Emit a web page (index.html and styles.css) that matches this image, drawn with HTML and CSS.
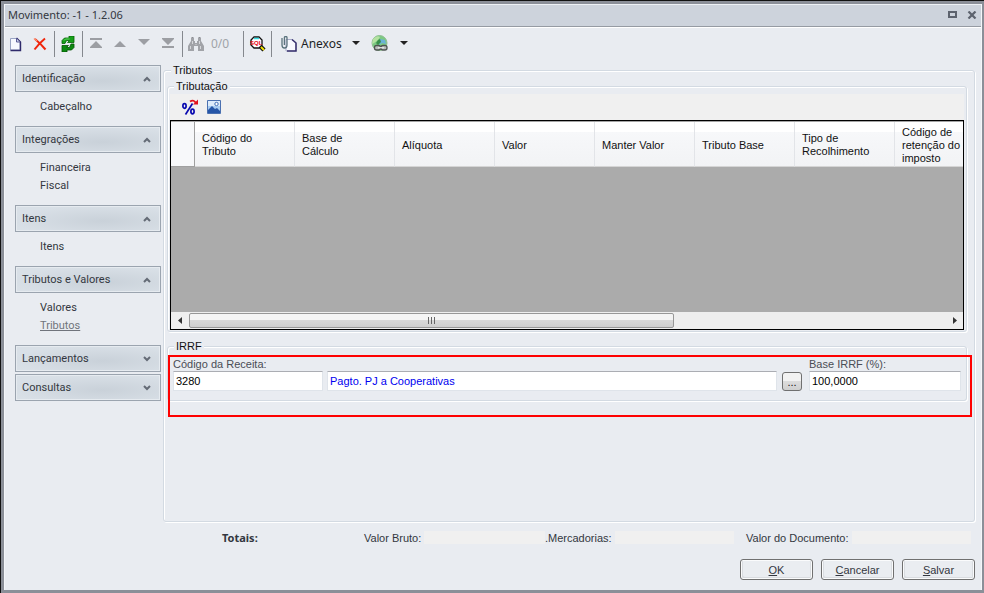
FILE: index.html
```html
<!DOCTYPE html>
<html lang="pt-BR">
<head>
<meta charset="utf-8">
<title>Movimento</title>
<link rel="stylesheet" href="styles.css">
</head>
<body>
<div class="window">
  <header class="titlebar">
    <h1 class="title">Movimento: -1 - 1.2.06</h1>
    <button class="winbtn" type="button" aria-label="Maximizar"><svg width="9" height="7"><path d="M1 1h7v5h-7z" fill="none" stroke="#5d636e" stroke-width="2"/></svg></button>
    <button class="winbtn" type="button" aria-label="Fechar"><svg width="10" height="8"><path d="M1.500 .5l7 7M8.500 .5l-7 7" fill="none" stroke="#5d636e" stroke-width="2.200"/></svg></button>
  </header>

  <nav class="toolbar" aria-label="Ferramentas">
    <button class="tool" type="button" aria-label="Novo"><svg width="16" height="16"><path d="M2.500 2.500h6l3.500 3.500v8h-9.500z" fill="#f7f9ff" stroke="#9aa4c4"/><path d="M8.500 2l4 4v8.500h-10" fill="none" stroke="#2f2a6b" stroke-width="1.400"/><path d="M8.500 2.500v3.500h3.500" fill="#cfd6ee" stroke="#5a5b96"/></svg></button>
    <button class="tool" type="button" aria-label="Excluir"><svg width="14" height="14"><path d="M2 2q6 5 10.500 10.500M12 1.500q-5 4-10.500 11" fill="none" stroke="#f0260c" stroke-width="2"/><path d="M1 1.500l3 2.500" stroke="#f98a6c" stroke-width="1.500"/></svg></button>
    <span class="sep"></span>
    <button class="tool" type="button" aria-label="Atualizar"><svg width="14" height="16"><path d="M1 7.500v-3l2.500-2.500h4.500v-2h5v6.500h-6.500l2-2h-3l-1.500 3z" fill="#17a01a" stroke="#056305" stroke-width=".8"/><path d="M13 8v3.500l-2.500 2.500h-4.500v2h-5v-6.500h6.500l-2 2h3l1.500-3.500z" fill="#0c8a10" stroke="#045204" stroke-width=".8"/><path d="M3 4.500l1.500-1.500h4" fill="none" stroke="#63d763"/></svg></button>
    <span class="sep"></span>
    <button class="tool" type="button" aria-label="Primeiro"><svg width="12" height="12"><path d="M0 0h12v2h-12zM6 3l6 6v1h-12v-1z" fill="#9c9ea3"/></svg></button>
    <button class="tool" type="button" aria-label="Anterior"><svg width="12" height="12"><path d="M6 3l6 6h-12z" fill="#9c9ea3"/></svg></button>
    <button class="tool" type="button" aria-label="Próximo"><svg width="12" height="12"><path d="M0 1h12l-6 6z" fill="#9c9ea3"/></svg></button>
    <button class="tool" type="button" aria-label="Último"><svg width="12" height="12"><path d="M0 0h12v1l-6 6-6-6zM0 8h12v2h-12z" fill="#9c9ea3"/></svg></button>
    <span class="sep"></span>
    <button class="tool" type="button" aria-label="Localizar"><svg width="16" height="16"><path d="M3 2h3v3h1v2h2v-2h1v-3h3v3l3 5v5h-6v-5h-4v5h-6v-5l3-5z" fill="#a1a3a8"/><path d="M3.500 1.500h2M10.500 1.500h2" stroke="#8b8d92"/><path d="M4.500 5v3M11.500 5v3M2.500 10v3M12.500 10v3M8 8v1" stroke="#d5d7da"/></svg></button>
    <span class="counter">0/0</span>
    <span class="sep"></span>
    <button class="tool" type="button" aria-label="Consulta SQL"><svg width="17" height="16"><path d="M11 10l4 4" stroke="#111" stroke-width="4.500"/><path d="M11.500 10.500l3.500 3.500" stroke="#f4e400" stroke-width="2"/><path d="M5 1h5l3 3v5l-3 3h-5l-3-3v-5z" fill="#fff" stroke="#111" stroke-width="1.300"/><path d="M5 2.500h5" stroke="#32dce2" stroke-width="1.500"/><text class="sql" x="1" y="9">SQL</text></svg></button>
    <span class="sep"></span>
    <button class="menu" type="button"><svg width="16" height="16"><path d="M5 3.500h6l4 3v8.500h-10z" fill="#f8f9ff" stroke="#a8abc8"/><path d="M11 3.500l4 3.500v8h-9" fill="none" stroke="#37306d" stroke-width="1.500"/><path d="M1 2v7q0 3 2.500 3t2.500-3v-7.500q0-1-1.300-1t-1.300 1v7.500" fill="none" stroke="#5c747e" stroke-width="1.300"/></svg><span class="menu-text">Anexos</span><svg width="8" height="5"><path d="M0 0h8l-4 4z" fill="#222"/></svg></button>
    <button class="menu globe" type="button" aria-label="Links"><svg width="17" height="17"><circle cx="8.500" cy="8" r="7.500" fill="#7cc983" stroke="#8fbd91"/><path d="M2 4q4-4 7-2l-2 3-4 3-2 1z" fill="#b5e2a1"/><path d="M9 4l5 1 1 4-4-1-3 2z" fill="#6ab2d6"/><path d="M7 5l2-1 1 3-3 3-2-2z" fill="#38904a"/><rect x="3.500" y="10.500" width="6" height="4.500" rx="2" fill="#b9bdbb" stroke="#4e5451" stroke-width="1.300"/><rect x="10" y="10.500" width="6" height="4.500" rx="2" fill="#b9bdbb" stroke="#4e5451" stroke-width="1.300"/><path d="M7 12.700h6" stroke="#e4e4e4" stroke-width="1.300"/></svg><svg width="8" height="5"><path d="M0 0h8l-4 4z" fill="#222"/></svg></button>
  </nav>

  <div class="body">
    <nav class="sidebar" aria-label="Seções">
      <section class="group">
        <button class="group-head" type="button" aria-expanded="true">Identificação<svg width="8" height="6"><path d="M1 5l3-3 3 3" fill="none" stroke="#646b76" stroke-width="2"/></svg></button>
        <div class="links"><a href="#">Cabeçalho</a></div>
      </section>
      <section class="group">
        <button class="group-head" type="button" aria-expanded="true">Integrações<svg width="8" height="6"><path d="M1 5l3-3 3 3" fill="none" stroke="#646b76" stroke-width="2"/></svg></button>
        <div class="links"><a href="#">Financeira</a><a href="#">Fiscal</a></div>
      </section>
      <section class="group">
        <button class="group-head" type="button" aria-expanded="true">Itens<svg width="8" height="6"><path d="M1 5l3-3 3 3" fill="none" stroke="#646b76" stroke-width="2"/></svg></button>
        <div class="links"><a href="#">Itens</a></div>
      </section>
      <section class="group">
        <button class="group-head" type="button" aria-expanded="true">Tributos e Valores<svg width="8" height="6"><path d="M1 5l3-3 3 3" fill="none" stroke="#646b76" stroke-width="2"/></svg></button>
        <div class="links"><a href="#">Valores</a><a class="current" href="#">Tributos</a></div>
      </section>
      <section class="group closed">
        <button class="group-head" type="button" aria-expanded="false">Lançamentos<svg width="8" height="6"><path d="M1 1l3 3 3-3" fill="none" stroke="#646b76" stroke-width="2"/></svg></button>
      </section>
      <section class="group closed">
        <button class="group-head" type="button" aria-expanded="false">Consultas<svg width="8" height="6"><path d="M1 1l3 3 3-3" fill="none" stroke="#646b76" stroke-width="2"/></svg></button>
      </section>
    </nav>

    <main class="main">
      <fieldset class="box taxes">
        <legend>Tributos</legend>
        <fieldset class="box taxation">
          <legend>Tributação</legend>
          <div class="grid-tools">
            <button class="tool" type="button" aria-label="Percentual"><svg width="16" height="16"><g fill="none" stroke="#0a0ab0" stroke-width="1.700"><ellipse cx="2.500" cy="7" rx="1.600" ry="2.300"/><ellipse cx="10.500" cy="12.500" rx="1.600" ry="2.300"/><path d="M10.500 4.500l-7 11"/></g><path d="M8 2.500q4-2.500 6 2" fill="none" stroke="#e0101c" stroke-width="1.800"/><path d="M11 5.500h5v-5z" fill="#e0101c"/></svg></button>
            <button class="tool" type="button" aria-label="Imagem"><svg width="14" height="14"><path d="M.5 .5h13v13h-13z" fill="#a9cdf2" stroke="#4a70b0"/><path d="M1 1h12v5h-12z" fill="#dcebfb"/><path d="M1 10l4-4 3 3 2-1 3 3v2h-12z" fill="#2656a8"/><circle cx="9.500" cy="4" r="1.700" fill="#fff" stroke="#3f6fb9"/></svg></button>
          </div>
          <div class="grid">
            <div class="grid-view">
              <table>
                <thead>
                  <tr>
                    <td class="corner"></td>
                    <th>Código do Tributo</th>
                    <th>Base de Cálculo</th>
                    <th>Alíquota</th>
                    <th>Valor</th>
                    <th>Manter Valor</th>
                    <th>Tributo Base</th>
                    <th>Tipo de Recolhimento</th>
                    <th class="tight">Código de retenção do imposto</th>
                  </tr>
                </thead>
              </table>
            </div>
            <div class="scroll">
              <button class="arrow" type="button" aria-label="Rolar para a esquerda"><svg width="4" height="7"><path d="M4 0v7l-4-3.500z" fill="#333"/></svg></button>
              <div class="track"><div class="thumb"><svg width="8" height="7"><path d="M.5 0v7M3.500 0v7M6.500 0v7" stroke="#666"/></svg></div></div>
              <button class="arrow" type="button" aria-label="Rolar para a direita"><svg width="4" height="7"><path d="M0 0v7l4-3.500z" fill="#333"/></svg></button>
            </div>
          </div>
        </fieldset>

        <div class="marked">
          <fieldset class="box irrf">
            <legend>IRRF</legend>
            <div class="fields">
              <div class="field code">
                <label for="code">Código da Receita:</label>
                <input id="code" type="text" value="3280">
              </div>
              <input class="desc" type="text" aria-label="Descrição da receita" value="Pagto. PJ a Cooperativas">
              <button class="browse" type="button" aria-label="Procurar receita">...</button>
              <div class="field base">
                <label for="base">Base IRRF (%):</label>
                <input id="base" type="text" value="100,0000">
              </div>
            </div>
          </fieldset>
        </div>
      </fieldset>

      <div class="totals">
        <strong>Totais:</strong>
        <div class="total gross"><span>Valor Bruto:</span><output></output></div>
        <div class="total goods"><span>.Mercadorias:</span><output></output></div>
        <div class="total doc"><span>Valor do Documento:</span><output></output></div>
      </div>
    </main>
  </div>

  <footer class="actions">
    <button class="action" type="button"><u>O</u>K</button>
    <button class="action" type="button"><u>C</u>ancelar</button>
    <button class="action" type="button"><u>S</u>alvar</button>
  </footer>
</div>
</body>
</html>
```
FILE: styles.css
```css
* {
  box-sizing: border-box;
}

body {
  margin: 0;
  background: #e9ecf1;
  color: #333740;
  font: 11px/14px "Liberation Sans", Arial, sans-serif;
}

button,
input {
  margin: 0;
  padding: 0;
  border: 0;
  background: none;
  color: inherit;
  font: inherit;
}

svg {
  display: block;
  flex: none;
}

.window {
  display: flex;
  flex-direction: column;
  min-height: 100vh;
  border: solid #8b8f98;
  border-width: 4px 2px 3px 4px;
  box-shadow: inset 1px 1px #f4f6f9, inset -1px 0 #f4f6f9;
  background: #e9ecf1;
}

/* Dark edge along the top and left of the frame */
.window::before {
  position: absolute;
  inset: 0;
  border: solid #111;
  border-width: 1px 0 0 1px;
  content: "";
  pointer-events: none;
}

/* Title bar */
.titlebar {
  display: flex;
  align-items: center;
  gap: 10px;
  height: 23px;
  margin: 0 1px;
  padding: 0 4px 2px 3px;
  border-top: 1px solid #eef1f5;
  border-bottom: 1px solid #969ba3;
  box-shadow: 0 1px #fff;
  background: #cdd3dc;
}

.title {
  flex: 1;
  margin: 0;
  font: 11px/14px "Noto Sans", Tahoma, sans-serif;
}

/* Toolbar */
.toolbar {
  display: flex;
  align-items: center;
  height: 33px;
}

.tool {
  display: flex;
  align-items: center;
  justify-content: center;
  width: 24px;
  height: 24px;
}

.sep {
  width: 1px;
  height: 26px;
  margin: 0 1px 0 2px;
  background: #85888e;
}

.counter {
  width: 33px;
  padding-left: 3px;
  color: #a0a3a8;
  font: 12px/16px "Noto Sans", Tahoma, sans-serif;
}

.sql {
  fill: #e80010;
  font: bold 6px "Liberation Sans", sans-serif;
}

.menu {
  display: flex;
  align-items: center;
  gap: 4px;
  height: 24px;
  padding: 0 3px 0 8px;
  color: #1d1f25;
  font: 12px/16px "Noto Sans", Tahoma, sans-serif;
}

.menu-text {
  margin-right: 6px;
}

.globe {
  gap: 12px;
}

/* Body */
.body {
  display: flex;
  flex: 1;
}

.sidebar {
  width: 159px;
  padding: 5px 2px 0 11px;
  font: 11px/18px Roboto, Tahoma, sans-serif;
}

.group {
  margin-bottom: 10px;
}

.closed {
  margin-bottom: 2px;
}

.group-head {
  display: flex;
  align-items: center;
  justify-content: space-between;
  width: 100%;
  height: 27px;
  padding: 0 9px 0 6px;
  border: 1px solid #9ba4af;
  box-shadow: inset 0 0 0 1px #e6ebf0;
  background: radial-gradient(ellipse at 60% 60%, #c9d1d9, #d9e0e7 75%);
}

.links {
  display: flex;
  flex-direction: column;
  align-items: flex-start;
  padding: 6px 0 0 25px;
}

.links a {
  color: #333740;
  text-decoration: none;
}

.links .current {
  color: #70747c;
  text-decoration: underline;
}

.main {
  display: flex;
  flex: 1;
  flex-direction: column;
  min-width: 0;
}

/* Etched group boxes */
.box {
  min-width: 0;
  margin: 0;
  padding: 0 2px;
  border: 1px solid #d3dae2;
  border-radius: 3px;
  box-shadow: inset 1px 1px #fff, 1px 1px #fff;
}

.box legend {
  margin-left: 4px;
  padding: 0 2px;
  background: #e9ecf1;
  color: #111;
}

.taxes {
  flex: 1;
  margin: 3px 7px 0 0;
  padding: 2px 7px 0 3px;
}

.grid-tools {
  display: flex;
  align-items: center;
  height: 26px;
  margin-top: 1px;
  padding-left: 8px;
  background: #f0f0f0;
}

.grid {
  margin-bottom: 1px;
  border: 1px solid #000;
}

.grid-view {
  height: 191px;
  overflow: hidden;
  border-top: 1px solid #a5a5a5;
  background: #ababab;
}

.grid table {
  width: 824px;
  border-collapse: separate;
  border-spacing: 0;
  table-layout: fixed;
}

.grid th {
  width: 100px;
  height: 45px;
  padding: 2px 28px 0 7px;
  border-right: 1px solid #e2e4e8;
  border-bottom: 1px solid #d5d5d5;
  background: linear-gradient(#fff 0 10px, #f7f8fa 10px, #f2f3f5);
  color: #111;
  font-weight: normal;
  line-height: 13px;
  text-align: left;
}

.grid th:nth-child(n + 4) {
  padding-right: 4px;
}

.grid .corner {
  width: 24px;
  padding: 0;
  border-right: 1px solid #a0a0a0;
  border-bottom: 1px solid #a0a0a0;
  background: #f7f8fa;
}

.grid .tight {
  padding-right: 30px;
}

.scroll {
  display: flex;
  height: 17px;
  background: #eee;
}

.arrow {
  display: flex;
  align-items: center;
  justify-content: center;
  width: 17px;
}

.track {
  flex: 1;
}

.thumb {
  display: flex;
  align-items: center;
  justify-content: center;
  width: 64%;
  height: 15px;
  margin: 1px;
  border: 1px solid #979797;
  border-radius: 2px;
  background: linear-gradient(#f4f4f4 0 50%, #d8d8d8 50%, #cfcfcf);
}

/* IRRF */
.marked {
  position: relative;
  margin-top: 7px;
}

.marked::after {
  position: absolute;
  inset: 16px -5px -16px 1px;
  border: 2px solid #f00;
  content: "";
  pointer-events: none;
}

.irrf {
  padding: 4px 5px 9px 2px;
}

.fields {
  display: flex;
  align-items: flex-end;
  padding-left: 3px;
}

.field {
  display: flex;
  flex-direction: column;
}

.field label {
  color: #4a4d55;
}

.fields input {
  width: 100%;
  height: 20px;
  padding: 0 2px;
  border: 1px solid #dfe4ea;
  border-top-color: #abadb3;
  background: #fff;
  color: #000;
}

.code {
  flex: 0 0 150px;
}

.fields .desc {
  flex: 1;
  width: auto;
  min-width: 0;
  margin: 0 5px 0 4px;
  color: #0000f0;
}

.browse {
  width: 20px;
  height: 19px;
  border: 1px solid #707070;
  border-radius: 3px;
  background: linear-gradient(#f2f2f2 0 50%, #dcdcdc 50%, #cfcfcf);
  color: #111;
}

.base {
  flex: 0 0 152px;
  margin-left: 7px;
}

/* Totals */
.totals {
  display: flex;
  align-items: center;
  height: 32px;
  padding: 0 11px 0 59px;
}

.totals strong {
  width: 142px;
  font: bold 11px/14px "Noto Sans", Tahoma, sans-serif;
}

.total {
  display: flex;
  flex: 1;
  gap: 3px;
}

.total output {
  flex: 1;
  height: 13px;
  background: #f0f0f0;
}

.gross {
  flex: 181;
}

.goods {
  flex: 189;
  margin-right: 12px;
}

.doc {
  flex: 225;
}

/* Actions */
.actions {
  display: flex;
  justify-content: flex-end;
  gap: 8px;
  padding: 5px 7px 10px;
}

.action {
  width: 73px;
  height: 21px;
  border: 1px solid #707070;
  border-radius: 3px;
  box-shadow: inset 0 0 0 1px #fafbfc, inset 2px -2px #d9dce0, inset -2px 0 #d9dce0;
  background: #eaedf1;
}
```
